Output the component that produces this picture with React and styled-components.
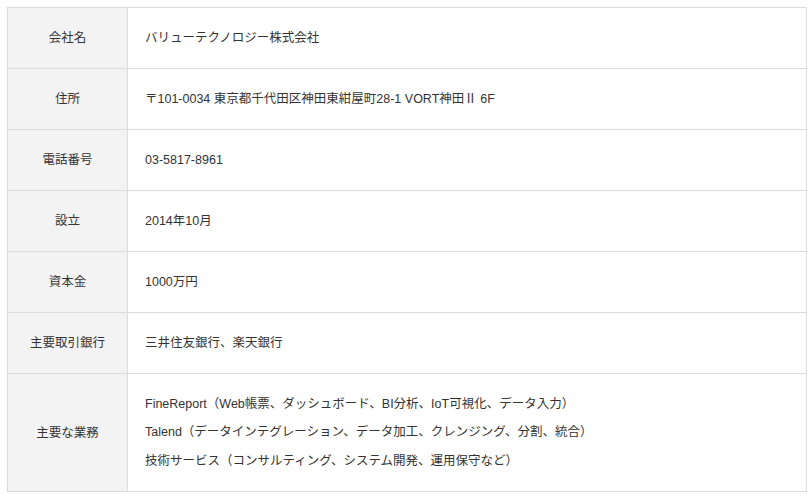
import React from "react";
import styled, { createGlobalStyle } from "styled-components";

const Global = createGlobalStyle`
  html, body { margin: 0; padding: 0; background: #fff; }
  body {
    padding: 7px;
    font-family: "Liberation Sans", Arial, "Noto Sans CJK JP", sans-serif;
    color: #333;
  }
`;

const Table = styled.table`
  width: 800px;
  border-collapse: collapse;
  border: 1px solid #dcdcdc;
  font-size: 12.5px;
  line-height: 18px;
`;

const Row = styled.tr`
  height: ${(p) => p.$h}px;
`;

const Label = styled.th`
  width: 119px;
  background: #f3f3f3;
  border: 1px solid #dcdcdc;
  font-weight: normal;
  text-align: center;
  vertical-align: middle;
  padding: 0;
`;

const Value = styled.td`
  border: 1px solid #dcdcdc;
  padding: 0 0 0 17px;
  vertical-align: middle;
  background: #fff;
`;

const Line = styled.div`
  line-height: 28.5px;
`;

const rows = [
  ["会社名", ["バリューテクノロジー株式会社"]],
  ["住所", ["〒101-0034 東京都千代田区神田東紺屋町28-1 VORT神田Ⅱ 6F"]],
  ["電話番号", ["03-5817-8961"]],
  ["設立", ["2014年10月"]],
  ["資本金", ["1000万円"]],
  ["主要取引銀行", ["三井住友銀行、楽天銀行"]],
  [
    "主要な業務",
    [
      "FineReport（Web帳票、ダッシュボード、BI分析、IoT可視化、データ入力）",
      "Talend（データインテグレーション、データ加工、クレンジング、分割、統合）",
      "技術サービス（コンサルティング、システム開発、運用保守など）",
    ],
  ],
];

export default function App() {
  return (
    <>
      <Global />
      <Table>
        <tbody>
          {rows.map(([label, lines]) => (
            <Row key={label} $h={lines.length > 1 ? 118 : 61}>
              <Label>{label}</Label>
              <Value>
                {lines.length > 1
                  ? lines.map((l) => <Line key={l}>{l}</Line>)
                  : lines[0]}
              </Value>
            </Row>
          ))}
        </tbody>
      </Table>
    </>
  );
}
